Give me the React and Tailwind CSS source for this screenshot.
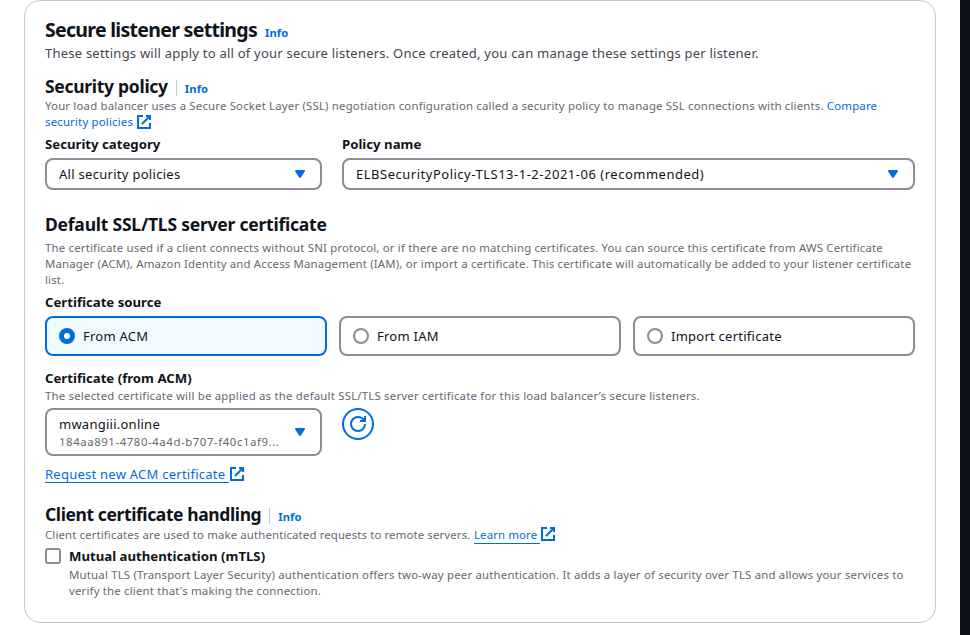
import React from "react";

function ExternalIcon({ className = "" }) {
  return (
    <svg viewBox="0 0 16 16" className={"h-4 w-4 shrink-0 fill-none stroke-[#006ce0] stroke-2 " + className}>
      <path d="M10 2h4v4M6 10l8-8" />
      <path d="M14 9.048V14H2V2h5" />
    </svg>
  );
}

function Caret() {
  return (
    <svg viewBox="0 0 16 16" className="h-4 w-4 shrink-0 fill-[#006ce0] stroke-[#006ce0]">
      <path d="M4 5h8l-4 6z" strokeLinejoin="round" strokeWidth="2" />
    </svg>
  );
}

function Heading({ children, tracking, info, className = "" }) {
  return (
    <div className={"flex h-[22px] items-center whitespace-nowrap " + className}>
      <h3 className={"text-[17.5px] leading-[22px] font-bold " + tracking}>{children}</h3>
      {info && (
        <>
          <span className="mt-[3px] ml-2 h-4 w-px bg-[#c6c6cd]" />
          <Info className="ml-2" />
        </>
      )}
    </div>
  );
}

function Info({ className = "" }) {
  return (
    <a className={"mt-[6px] text-[11.2px] leading-4 font-bold tracking-[0.1px] text-[#006ce0] " + className}>Info</a>
  );
}

function Label({ children, className = "" }) {
  return <div className={"h-5 text-[13.2px] leading-5 font-bold whitespace-nowrap " + className}>{children}</div>;
}

function Line({ children, tracking = "tracking-[0.18px]", className = "" }) {
  return (
    <div className={"flex h-4 text-[11.4px] leading-4 whitespace-pre text-[#656871] " + tracking + " " + className}>
      {children}
    </div>
  );
}

function Body({ children, tracking = "tracking-[0.25px]" }) {
  return <span className={"text-[13px] leading-5 whitespace-nowrap " + tracking}>{children}</span>;
}

function Select({ children, className = "" }) {
  return (
    <div className={"flex items-center justify-between rounded-lg border-2 border-[#8c8c94] px-3 " + className}>
      {children}
      <Caret />
    </div>
  );
}

function Tile({ label, selected }) {
  return (
    <div
      className={
        "flex h-10 items-center gap-2 rounded-lg border-2 px-3 " +
        (selected ? "border-[#006ce0] bg-[#f0fbff]" : "border-[#8c8c94]")
      }
    >
      <span
        className={
          "h-4 w-4 rounded-full bg-white " + (selected ? "border-[5px] border-[#006ce0]" : "border-2 border-[#8c8c94]")
        }
      />
      <Body>{label}</Body>
    </div>
  );
}

export default function App() {
  return (
    <div className="flex h-[635px] justify-between overflow-hidden bg-white pl-6 font-['Noto_Sans',sans-serif] text-[#0f141a]">
      <main className="h-[623px] w-[912px] rounded-2xl border border-[#c6c6cd] px-5 pt-[17px]">
        <div className="flex h-6 items-center">
          <h2 className="text-[19.5px] leading-6 font-bold tracking-[-0.7px]">Secure listener settings</h2>
          <Info className="ml-2" />
        </div>
        <p className="mt-px flex h-5 text-[#424650]">
          <Body tracking="tracking-[0.23px]">
            These settings will apply to all of your secure listeners. Once created, you can manage these settings per
            listener.
          </Body>
        </p>

        <Heading info tracking="tracking-[-0.29px]" className="mt-3">Security policy</Heading>
        <Line className="mt-px">
          <span>
            Your load balancer uses a Secure Socket Layer (SSL) negotiation configuration called a security policy to
            manage SSL connections with clients.{" "}
          </span>
          <a className="text-[#006ce0]">Compare</a>
        </Line>
        <Line>
          <a className="w-[91px] text-[#006ce0]">security policies</a>
          <ExternalIcon />
        </Line>

        <div className="mt-1 flex gap-5">
          <div className="w-[277px]">
            <Label>Security category</Label>
            <Select className="mt-1 h-8">
              <Body tracking="tracking-[0.29px]">All security policies</Body>
            </Select>
          </div>
          <div className="w-[573px]">
            <Label>Policy name</Label>
            <Select className="mt-1 h-8">
              <Body tracking="tracking-[0.51px]">ELBSecurityPolicy-TLS13-1-2-2021-06 (recommended)</Body>
            </Select>
          </div>
        </div>

        <Heading tracking="tracking-[-0.22px]" className="mt-[23px]">Default SSL/TLS server certificate</Heading>
        <Line tracking="tracking-[0.185px]" className="mt-[5px]">
          The certificate used if a client connects without SNI protocol, or if there are no matching certificates. You
          can source this certificate from AWS Certificate
        </Line>
        <Line tracking="tracking-[0.17px]">
          Manager (ACM), Amazon Identity and Access Management (IAM), or import a certificate. This certificate will
          automatically be added to your listener certificate
        </Line>
        <Line>list.</Line>

        <Label className="mt-1">Certificate source</Label>
        <div className="mt-1 grid grid-cols-3 gap-3">
          <Tile label="From ACM" selected />
          <Tile label="From IAM" />
          <Tile label="Import certificate" />
        </div>

        <Label className="mt-3">Certificate (from ACM)</Label>
        <Line tracking="tracking-[0.205px]">
          The selected certificate will be applied as the default SSL/TLS server certificate for this load balancer’s
          secure listeners.
        </Line>
        <div className="mt-1 flex items-start gap-5">
          <Select className="h-12 w-[277px]">
            <div>
              <div className="flex h-[18px] items-center">
                <Body>mwangiii.online</Body>
              </div>
              <Line tracking="tracking-[0.57px]" className="mt-px -mb-px">
                184aa891-4780-4a4d-b707-f40c1af9...
              </Line>
            </div>
          </Select>
          <button className="flex h-8 w-8 items-center justify-center rounded-full border-2 border-[#006ce0]">
            <svg viewBox="0 0 16 16" className="h-4 w-4 fill-none stroke-[#006ce0] stroke-2">
              <path d="M10 5h5V0" />
              <path d="M15 8a6.957 6.957 0 0 1-7 7 6.957 6.957 0 0 1-7-7 6.957 6.957 0 0 1 7-7 6.87 6.87 0 0 1 6.3 4" />
            </svg>
          </button>
        </div>
        <div className="mt-2 flex h-5">
          <a className="flex h-[19px] w-[184px] items-center border-b border-[#006ce0] pt-0.5 text-[#006ce0]">
            <Body tracking="tracking-[0.25px]">Request new ACM certificate</Body>
          </a>
          <ExternalIcon className="mt-0.5" />
        </div>

        <Heading info tracking="tracking-[-0.4px]" className="mt-[19px]">Client certificate handling</Heading>
        <Line tracking="tracking-[0.13px]" className="mt-0.5">
          <span className="w-[429px]">Client certificates are used to make authenticated requests to remote servers.</span>
          <a className="h-[17px] w-[66px] border-b border-[#006ce0] text-[#006ce0]">Learn more</a>
          <ExternalIcon className="-mt-px" />
        </Line>
        <div className="mt-[3px] flex">
          <span className="mt-0.5 h-4 w-4 rounded-[3px] border-2 border-[#8c8c94]" />
          <div className="ml-2">
            <Label>Mutual authentication (mTLS)</Label>
            <Line tracking="tracking-[0.193px]" className="mt-px">
              Mutual TLS (Transport Layer Security) authentication offers two-way peer authentication. It adds a layer
              of security over TLS and allows your services to
            </Line>
            <Line>verify the client that's making the connection.</Line>
          </div>
        </div>
      </main>
      <div className="w-2.5 bg-[#0d1117]" />
    </div>
  );
}
